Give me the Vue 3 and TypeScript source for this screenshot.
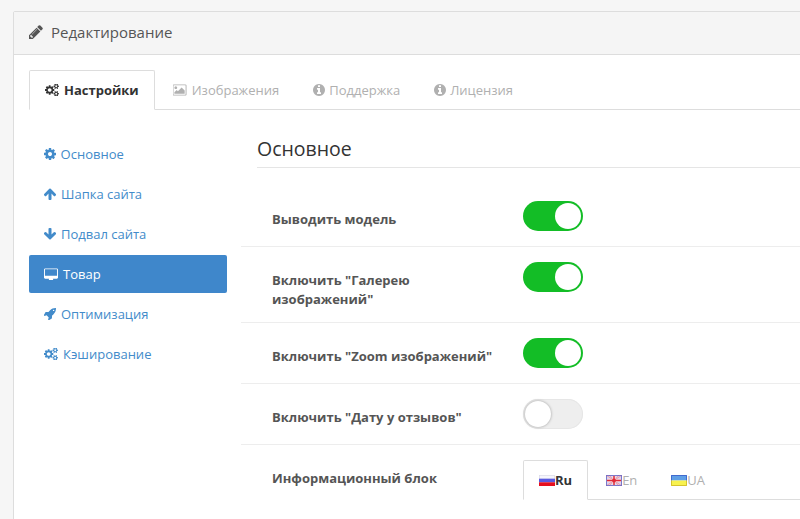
<script setup lang="ts">
const gear = 'M1152 896q0-106-75-181t-181-75-181 75-75 181 75 181 181 75 181-75 75-181zm512-109v222q0 12-8 23t-20 13l-185 28q-19 54-39 91 35 50 107 138 10 12 10 25t-9 23q-27 37-99 108t-94 71q-12 0-26-9l-138-108q-44 23-91 38-16 136-29 186-7 28-36 28h-222q-14 0-24.5-8.5t-11.5-21.5l-28-184q-49-16-90-37l-141 107q-10 9-25 9-14 0-25-11-126-114-165-168-7-10-7-23 0-12 8-23 15-21 51-66.5t54-70.5q-27-50-41-99l-183-27q-13-2-21-12.5t-8-23.5v-222q0-12 8-23t19-13l186-28q14-46 39-92-40-57-107-138-10-12-10-24 0-10 9-23 26-36 98.5-107.5t94.5-71.5q13 0 26 10l138 107q44-23 91-38 16-136 29-186 7-28 36-28h222q14 0 24.5 8.5t11.5 21.5l28 184q49 16 90 37l142-107q9-9 24-9 13 0 25 10 129 119 165 170 7 8 7 22 0 12-8 23-15 21-51 66.5t-54 70.5q26 50 41 98l183 28q13 2 21 12.5t8 23.5z'
const cogsPath = 'M960 896q0-106-75-181t-181-75-181 75-75 181 75 181 181 75 181-75 75-181zm768 512q0-52-38-90t-90-38-90 38-38 90q0 53 37.5 90.5t90.5 37.5 90.5-37.5 37.5-90.5zm0-1024q0-52-38-90t-90-38-90 38-38 90q0 53 37.5 90.5t90.5 37.5 90.5-37.5 37.5-90.5zm-384 421v185q0 10-7 19.5t-16 10.5l-155 24q-11 35-32 76 34 48 90 115 7 11 7 20 0 12-7 19-23 30-82.5 89.5t-78.5 59.5q-11 0-21-7l-115-90q-37 19-77 31-11 108-23 155-7 24-30 24h-186q-11 0-20-7.5t-10-17.5l-23-153q-34-10-75-31l-118 89q-7 7-20 7-11 0-21-8-144-133-144-160 0-9 7-19 10-14 41-53t47-61q-23-44-35-82l-152-24q-10-1-17-9.5t-7-19.5v-185q0-10 7-19.5t16-10.5l155-24q11-35 32-76-34-48-90-115-7-11-7-20 0-12 7-20 22-30 82-89t79-59q11 0 21 7l115 90q34-18 77-32 11-108 23-154 7-24 30-24h186q11 0 20 7.5t10 17.5l23 153q34 10 75 31l118-89q8-7 20-7 11 0 21 8 144 133 144 160 0 8-7 19-12 16-42 54t-45 60q23 48 34 82l152 23q10 2 17 10.5t7 19.5zm640 533v140q0 16-149 31-12 27-30 52 51 113 51 138 0 4-4 7-122 71-124 71-8 0-46-47t-52-68q-20 2-30 2t-30-2q-14 21-52 68t-46 47q-2 0-124-71-4-3-4-7 0-25 51-138-18-25-30-52-149-15-149-31v-140q0-16 149-31 13-29 30-52-51-113-51-138 0-4 4-7 4-2 35-20t59-34 30-16q8 0 46 46.5t52 67.5q20-2 30-2t30 2q51-71 92-112l6-2q4 0 124 70 4 3 4 7 0 25-51 138 17 23 30 52 149 15 149 31zm0-1024v140q0 16-149 31-12 27-30 52 51 113 51 138 0 4-4 7-122 71-124 71-8 0-46-47t-52-68q-20 2-30 2t-30-2q-14 21-52 68t-46 47q-2 0-124-71-4-3-4-7 0-25 51-138-18-25-30-52-149-15-149-31v-140q0-16 149-31 13-29 30-52-51-113-51-138 0-4 4-7 4-2 35-20t59-34 30-16q8 0 46 46.5t52 67.5q20-2 30-2t30 2q51-71 92-112l6-2q4 0 124 70 4 3 4 7 0 25-51 138 17 23 30 52 149 15 149 31z'
const info = 'M1152 1376v-160q0-14-9-23t-23-9h-96v-512q0-14-9-23t-23-9h-320q-14 0-23 9t-9 23v160q0 14 9 23t23 9h96v320h-96q-14 0-23 9t-9 23v160q0 14 9 23t23 9h448q14 0 23-9t9-23zm-128-896v-160q0-14-9-23t-23-9h-192q-14 0-23 9t-9 23v160q0 14 9 23t23 9h192q14 0 23-9t9-23zm640 416q0 209-103 385.5t-279.5 279.5-385.5 103-385.5-103-279.5-279.5-103-385.5 103-385.5 279.5-279.5 385.5-103 385.5 103 279.5 279.5 103 385.5z'
const pencil = 'M491 1536l91-91-235-235-91 91v107h128v128h107zm523-928q0-22-22-22-10 0-17 7l-542 542q-7 7-7 17 0 22 22 22 10 0 17-7l542-542q7-7 7-17zm-54-192l416 416-832 832h-416v-416zm683 96q0 53-37 90l-166 166-416-416 166-165q36-38 90-38 53 0 91 38l235 234q37 39 37 91z'
const picture = 'M576 576q0 80-56 136t-136 56-136-56-56-136 56-136 136-56 136 56 56 136zm1024 384v448h-1408v-192l320-320 160 160 512-512zm96-704h-1600q-13 0-22.5 9.5t-9.5 22.5v1216q0 13 9.5 22.5t22.5 9.5h1600q13 0 22.5-9.5t9.5-22.5v-1216q0-13-9.5-22.5t-22.5-9.5zm160 32v1216q0 66-47 113t-113 47h-1600q-66 0-113-47t-47-113v-1216q0-66 47-113t113-47h1600q66 0 113 47t47 113z'
const up = 'M1675 971q0 51-37 90l-75 75q-38 38-91 38-54 0-90-38l-294-293v704q0 52-37.5 84.5t-90.5 32.5h-128q-53 0-90.5-32.5t-37.5-84.5v-704l-294 293q-36 38-90 38t-90-38l-75-75q-38-38-38-90 0-53 38-91l651-651q35-37 90-37 54 0 91 37l651 651q37 39 37 91z'
const down = 'M1675 832q0 53-37 90l-651 652q-39 37-91 37-53 0-90-37l-651-652q-38-36-38-90 0-53 38-91l74-75q39-37 91-37 53 0 90 37l294 294v-704q0-52 38-90t90-38h128q52 0 90 38t38 90v704l294-294q37-37 90-37 52 0 91 37l75 75q37 39 37 91z'
const rocket = 'M1504 448q0-40-28-68t-68-28-68 28-28 68 28 68 68 28 68-28 28-68zm224-288q0 249-75.5 430.5t-253.5 360.5q-81 80-195 176l-20 379q-2 16-16 26l-384 224q-7 4-16 4-12 0-23-9l-64-64q-13-14-8-32l85-276-281-281-276 85q-3 1-9 1-14 0-23-9l-64-64q-17-19-5-39l224-384q10-14 26-16l379-20q96-114 176-195 188-187 358-258t431-71q14 0 24 9.5t10 22.5z'
const desktop = 'M160 128h1600q66 0 113 47t47 113v1088q0 66-47 113t-113 47h-544q0 37 16 77t32 71 16 44q0 26-19 45t-45 19h-512q-26 0-45-19t-19-45q0-14 16-44t32-70 16-78h-544q-66 0-113-47t-47-113v-1088q0-66 47-113t113-47zm-32 160v832q0 13 9.5 22.5t22.5 9.5h1600q13 0 22.5-9.5t9.5-22.5v-832q0-13-9.5-22.5t-22.5-9.5h-1600q-13 0-22.5 9.5t-9.5 22.5z'

type Side = { label: string; icon: string; active?: boolean }
const sideItems: Side[] = [
  { label: 'Основное', icon: 'cog' },
  { label: 'Шапка сайта', icon: 'up' },
  { label: 'Подвал сайта', icon: 'down' },
  { label: 'Товар', icon: 'desktop', active: true },
  { label: 'Оптимизация', icon: 'rocket' },
  { label: 'Кэширование', icon: 'cogs' },
]
const rows = [
  { label: 'Выводить модель', on: true },
  { label: 'Включить "Галерею изображений"', on: true },
  { label: 'Включить "Zoom изображений"', on: true },
  { label: 'Включить "Дату у отзывов"', on: false },
]
</script>

<template>
  <div class="page">
    <section class="panel">
      <header class="panel-head">
        <svg class="pencil" viewBox="128 128 1536 1536"><path :d="pencil" /></svg>
        <span>Редактирование</span>
      </header>
      <div class="panel-body">
        <nav class="tabs">
          <div class="tab active">
            <svg class="cogs" viewBox="64 128 1920 1536"><path :d="cogsPath" /></svg>
            <span>Настройки</span>
          </div>
          <div class="tab">
            <svg class="ic-pic" viewBox="0 128 1920 1536"><path :d="picture" /></svg>
            <span>Изображения</span>
          </div>
          <div class="tab">
            <svg class="ic-info" viewBox="128 128 1536 1536"><path :d="info" /></svg>
            <span>Поддержка</span>
          </div>
          <div class="tab">
            <svg class="ic-info" viewBox="128 128 1536 1536"><path :d="info" /></svg>
            <span>Лицензия</span>
          </div>
        </nav>
        <div class="columns">
          <ul class="side">
            <li v-for="it in sideItems" :key="it.label" class="side-item" :class="{ active: it.active }">
              <svg v-if="it.icon === 'cog'" class="s-cog" viewBox="128 128 1536 1536"><path :d="gear" /></svg>
              <svg v-else-if="it.icon === 'up'" class="s-arrow" viewBox="128 128 1536 1536"><path :d="up" /></svg>
              <svg v-else-if="it.icon === 'down'" class="s-arrow" viewBox="128 128 1536 1536"><path :d="down" /></svg>
              <svg v-else-if="it.icon === 'desktop'" class="s-desk" viewBox="0 128 1920 1536"><path :d="desktop" /></svg>
              <svg v-else-if="it.icon === 'rocket'" class="s-arrow" viewBox="128 128 1600 1600"><path :d="rocket" /></svg>
              <svg v-else class="s-cogs" viewBox="64 128 1920 1536"><path :d="cogsPath" /></svg>
              <span>{{ it.label }}</span>
            </li>
          </ul>
          <div class="content">
            <h2 class="title">Основное</h2>
            <div v-for="r in rows" :key="r.label" class="row">
              <div class="label">{{ r.label }}</div>
              <div class="toggle" :class="{ on: r.on }"><i class="knob"></i></div>
            </div>
            <div class="row last">
              <div class="label info">Информационный блок</div>
              <div class="lang-wrap">
                <div class="lang-tabs">
                  <div class="lang active">
                    <svg class="flag" viewBox="0 0 16 11">
                      <rect width="16" height="11" fill="#f6f6fc" />
                      <rect x=".5" y=".5" width="15" height="3.5" fill="none" stroke="#d8d8e4" stroke-width=".6" />
                      <rect y="3.7" width="16" height="3.6" fill="#5a5ae0" />
                      <rect y="7.3" width="16" height="3.7" fill="#e60e1e" />
                    </svg>
                    <span>Ru</span>
                  </div>
                  <div class="lang">
                    <svg class="flag" viewBox="0 0 16 11">
                      <rect width="16" height="11" fill="#d8d4ee" />
                      <path d="M0 0L16 11M16 0L0 11M3 0L13 11M13 0L3 11" stroke="#ee9aa6" stroke-width="1" />
                      <path d="M8 0V11M0 5.5H16" stroke="#f8dcdf" stroke-width="3" />
                      <path d="M8 1V10M1 5.5H15" stroke="#e02a38" stroke-width="1.5" />
                      <circle cx="8" cy="5.5" r="2" fill="#e02a38" />
                      <rect x=".5" y=".5" width="15" height="10" fill="none" stroke="#5a5ac0" stroke-opacity=".75" />
                    </svg>
                    <span>En</span>
                  </div>
                  <div class="lang">
                    <svg class="flag" viewBox="0 0 16 11">
                      <rect width="16" height="5.5" fill="#5f9fe6" />
                      <rect y="5.5" width="16" height="5.5" fill="#f8f24e" />
                      <path d="M.5 5.5V.5H15.5V5.5" fill="none" stroke="#3a5cc8" stroke-opacity=".8" />
                      <path d="M.5 5.5V10.5H15.5V5.5" fill="none" stroke="#c8b020" stroke-opacity=".7" />
                    </svg>
                    <span>UA</span>
                  </div>
                </div>
              </div>
            </div>
          </div>
        </div>
      </div>
    </section>
  </div>
</template>

<style>
html, body { margin: 0; padding: 0; overflow: hidden; }
</style>

<style scoped>
.page {
  width: 800px;
  height: 519px;
  overflow: hidden;
  box-sizing: border-box;
  padding: 11px 0 0 13px;
  background: #f6f6f6;
  font-family: "Open Sans", sans-serif;
  font-size: 13px;
  color: #555;
}
.panel {
  width: 830px;
  height: 560px;
  box-sizing: border-box;
  background: #fff;
  border: 1px solid #ddd;
  border-radius: 2px;
}
.panel-head {
  height: 43px;
  box-sizing: border-box;
  display: flex;
  align-items: center;
  gap: 8px;
  padding: 0 0 2px 15px;
  background: #f5f5f5;
  border-bottom: 1px solid #ddd;
  font-size: 15px;
  color: #555;
}
.pencil { width: 14px; height: 14px; fill: #555; }
.panel-body { padding: 15px 0 0 15px; }
.tabs {
  display: flex;
  height: 40px;
  box-sizing: border-box;
  border-bottom: 1px solid #ddd;
}
.tab {
  height: 40px;
  box-sizing: border-box;
  display: flex;
  align-items: center;
  gap: 5px;
  padding: 0 15px;
  margin-right: 2px;
  border: 1px solid transparent;
  color: #b0b0b0;
  fill: #b0b0b0;
}
.tab.active {
  background: #fff;
  border-color: #ddd;
  border-bottom-color: #fff;
  border-radius: 2px 2px 0 0;
  color: #333;
  fill: #333;
  font-weight: 700;
}
.cogs { width: 14px; height: 12px; }
.ic-pic { width: 14px; height: 12px; }
.ic-info { width: 12px; height: 12px; margin-right: -1px; }
.columns { display: flex; }
.side {
  list-style: none;
  margin: 25px 0 0;
  padding: 0;
  width: 198px;
  flex: none;
  display: flex;
  flex-direction: column;
  gap: 2px;
}
.side-item {
  height: 38px;
  box-sizing: border-box;
  display: flex;
  align-items: center;
  gap: 5px;
  padding-left: 15px;
  border-radius: 2px;
  color: #428bca;
  fill: #428bca;
}
.side-item.active { background: #3f87cb; color: #fff; fill: #fff; }
.s-cog { width: 12px; height: 12px; margin-right: -.4px; }
.s-arrow { width: 12px; height: 12px; }
.s-desk { width: 14px; height: 12px; }
.s-cogs { width: 14px; height: 12px; }
.content { margin-left: 14px; flex: 1; min-width: 0; padding-top: 25px; }
.title {
  margin: 0 0 18px 16px;
  height: 32px;
  font-size: 19.5px;
  line-height: 27px;
  font-weight: 400;
  color: #333;
  border-bottom: 1px solid #e5e5e5;
}
.row {
  display: flex;
  align-items: flex-start;
  padding: 15px 0 15px 31px;
  border-bottom: 1px solid #ededed;
}
.row.last { border-bottom: 0; }
.label {
  width: 251px;
  flex: none;
  box-sizing: border-box;
  padding: 9px 30px 0 0;
  margin-bottom: -1px;
  font-weight: 700;
  line-height: 18.57px;
  color: #555;
}
.toggle {
  width: 60px;
  height: 30px;
  box-sizing: border-box;
  border-radius: 15px;
  background: #eee;
  padding: 2px;
  display: flex;
  box-shadow: inset 0 0 0 1px #e6e6e6;
}
.toggle.on { background: #13bd26; justify-content: flex-end; box-shadow: none; }
.knob {
  width: 26px;
  height: 26px;
  border-radius: 50%;
  background: #fff;
  box-shadow: 0 0 3px rgba(0, 0, 0, .35);
}
.toggle.on .knob { box-shadow: none; }
.lang-wrap { flex: 1; min-width: 0; }
.lang-tabs {
  display: flex;
  height: 40px;
  box-sizing: border-box;
  border-bottom: 1px solid #ddd;
}
.lang {
  height: 40px;
  box-sizing: border-box;
  display: flex;
  align-items: center;
  padding: 0 15px;
  margin-right: 2px;
  border: 1px solid transparent;
  color: #b0b0b0;
}
.lang.active {
  border-color: #ddd;
  border-bottom-color: #fff;
  border-radius: 2px 2px 0 0;
  background: #fff;
  color: #333;
  font-weight: 700;
}
.flag { width: 16px; height: 11px; flex: none; }
</style>
